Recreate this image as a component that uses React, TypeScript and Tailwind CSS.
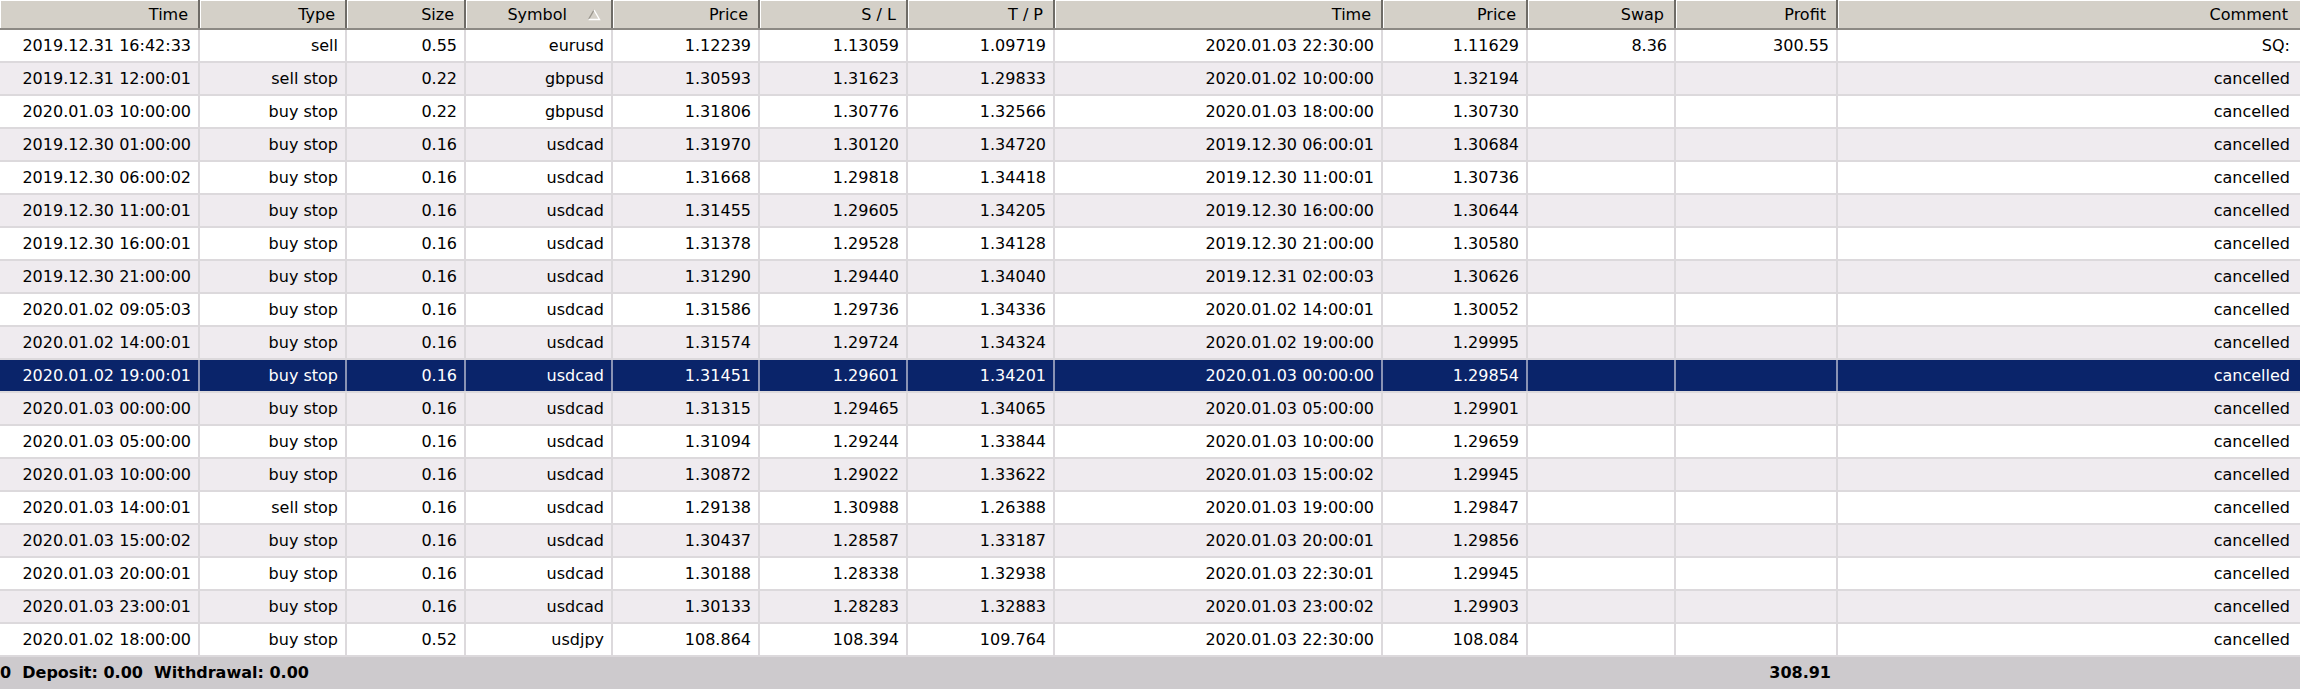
import React from "react";

type Row = string[];

const rows: Row[] = [
  ["2019.12.31 16:42:33", "sell", "0.55", "eurusd", "1.12239", "1.13059", "1.09719", "2020.01.03 22:30:00", "1.11629", "8.36", "300.55", "SQ:"],
  ["2019.12.31 12:00:01", "sell stop", "0.22", "gbpusd", "1.30593", "1.31623", "1.29833", "2020.01.02 10:00:00", "1.32194", "", "", "cancelled"],
  ["2020.01.03 10:00:00", "buy stop", "0.22", "gbpusd", "1.31806", "1.30776", "1.32566", "2020.01.03 18:00:00", "1.30730", "", "", "cancelled"],
  ["2019.12.30 01:00:00", "buy stop", "0.16", "usdcad", "1.31970", "1.30120", "1.34720", "2019.12.30 06:00:01", "1.30684", "", "", "cancelled"],
  ["2019.12.30 06:00:02", "buy stop", "0.16", "usdcad", "1.31668", "1.29818", "1.34418", "2019.12.30 11:00:01", "1.30736", "", "", "cancelled"],
  ["2019.12.30 11:00:01", "buy stop", "0.16", "usdcad", "1.31455", "1.29605", "1.34205", "2019.12.30 16:00:00", "1.30644", "", "", "cancelled"],
  ["2019.12.30 16:00:01", "buy stop", "0.16", "usdcad", "1.31378", "1.29528", "1.34128", "2019.12.30 21:00:00", "1.30580", "", "", "cancelled"],
  ["2019.12.30 21:00:00", "buy stop", "0.16", "usdcad", "1.31290", "1.29440", "1.34040", "2019.12.31 02:00:03", "1.30626", "", "", "cancelled"],
  ["2020.01.02 09:05:03", "buy stop", "0.16", "usdcad", "1.31586", "1.29736", "1.34336", "2020.01.02 14:00:01", "1.30052", "", "", "cancelled"],
  ["2020.01.02 14:00:01", "buy stop", "0.16", "usdcad", "1.31574", "1.29724", "1.34324", "2020.01.02 19:00:00", "1.29995", "", "", "cancelled"],
  ["2020.01.02 19:00:01", "buy stop", "0.16", "usdcad", "1.31451", "1.29601", "1.34201", "2020.01.03 00:00:00", "1.29854", "", "", "cancelled"],
  ["2020.01.03 00:00:00", "buy stop", "0.16", "usdcad", "1.31315", "1.29465", "1.34065", "2020.01.03 05:00:00", "1.29901", "", "", "cancelled"],
  ["2020.01.03 05:00:00", "buy stop", "0.16", "usdcad", "1.31094", "1.29244", "1.33844", "2020.01.03 10:00:00", "1.29659", "", "", "cancelled"],
  ["2020.01.03 10:00:00", "buy stop", "0.16", "usdcad", "1.30872", "1.29022", "1.33622", "2020.01.03 15:00:02", "1.29945", "", "", "cancelled"],
  ["2020.01.03 14:00:01", "sell stop", "0.16", "usdcad", "1.29138", "1.30988", "1.26388", "2020.01.03 19:00:00", "1.29847", "", "", "cancelled"],
  ["2020.01.03 15:00:02", "buy stop", "0.16", "usdcad", "1.30437", "1.28587", "1.33187", "2020.01.03 20:00:01", "1.29856", "", "", "cancelled"],
  ["2020.01.03 20:00:01", "buy stop", "0.16", "usdcad", "1.30188", "1.28338", "1.32938", "2020.01.03 22:30:01", "1.29945", "", "", "cancelled"],
  ["2020.01.03 23:00:01", "buy stop", "0.16", "usdcad", "1.30133", "1.28283", "1.32883", "2020.01.03 23:00:02", "1.29903", "", "", "cancelled"],
  ["2020.01.02 18:00:00", "buy stop", "0.52", "usdjpy", "108.864", "108.394", "109.764", "2020.01.03 22:30:00", "108.084", "", "", "cancelled"],
];

const headers = ["Time", "Type", "Size", "Symbol", "Price", "S / L", "T / P", "Time", "Price", "Swap", "Profit", "Comment"];

const GRID =
  "grid grid-cols-[200px_147px_119px_147px_147px_148px_147px_328px_145px_148px_162px_1fr]";

function SortArrow() {
  return (
    <svg width="14" height="12" viewBox="0 0 14 12" className="ml-[20px]">
      <path d="M7 1 L1.5 10.5" stroke="#9a968e" strokeWidth="1.4" fill="none" />
      <path d="M7 1 L12.5 10.5 L1.5 10.5" stroke="#ffffff" strokeWidth="1.4" fill="none" />
    </svg>
  );
}

export default function App() {
  return (
    <div className="w-[2300px] h-[689px] overflow-hidden bg-white font-['DejaVu_Sans','Verdana',sans-serif] text-[16px] text-black leading-none">
      {/* Header */}
      <div className={`${GRID} h-[30px] bg-[#d4d0c8] border-b-2 border-[#8c8984]`}>
        {headers.map((h, i) => (
          <div
            key={i}
            className="flex items-center justify-end pr-[10px] pt-[1px] border-r-2 border-r-[#6e6b66] shadow-[inset_1px_1px_0_#ffffff] last:border-r-0 last:pr-[12px] whitespace-pre"
          >
            {i === 3 ? (
              <>
                <span>{h}</span>
                <SortArrow />
              </>
            ) : (
              h
            )}
          </div>
        ))}
      </div>

      {/* Rows */}
      {rows.map((r, ri) => {
        const selected = ri === 10;
        const bg = selected ? "bg-[#0a246a] text-white" : ri % 2 === 1 ? "bg-[#efebef]" : "bg-white";
        return (
          <div key={ri} className={`${GRID} h-[33px] border-b-2 border-[#dcd9dc] ${bg}`}>
            {r.map((c, ci) => (
              <div
                key={ci}
                className={`flex items-center justify-end pr-[7px] whitespace-pre border-r-2 last:border-r-0 last:pr-[10px] ${
                  selected ? "border-r-[#8a93b4]" : "border-r-[#dcd9dc]"
                }`}
              >
                {c}
              </div>
            ))}
          </div>
        );
      })}

      {/* Footer */}
      <div className={`${GRID} h-[32px] bg-[#cdcacd] font-bold`}>
        <div className="col-span-10 flex items-center whitespace-pre">0  Deposit: 0.00  Withdrawal: 0.00</div>
        <div className="flex items-center justify-end pr-[7px]">308.91</div>
        <div />
      </div>
    </div>
  );
}
